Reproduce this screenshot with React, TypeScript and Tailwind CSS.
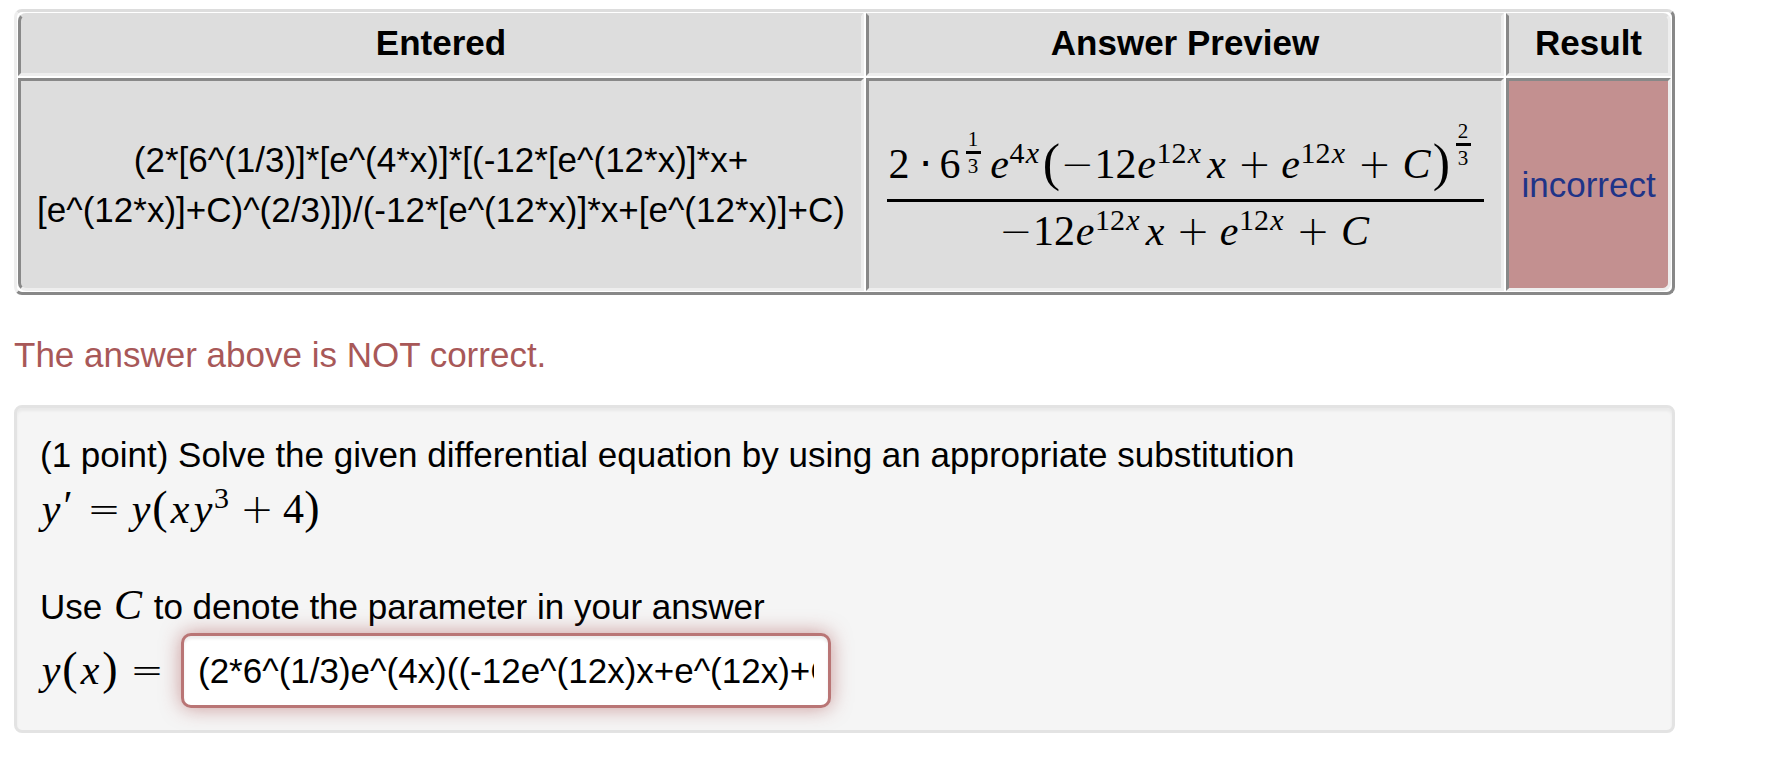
import React from "react";

type SymProps = { children: React.ReactNode; className: string };

function Sym({ children, className }: SymProps) {
  return <span className={`inline-block text-center ${className}`}>{children}</span>;
}

const E = () => <Sym className="w-5 italic">e</Sym>;
const X = () => <Sym className="w-6 italic">x</Sym>;
const Y = () => <Sym className="w-[22px] italic">y</Sym>;
const C = () => <Sym className="w-8 italic">C</Sym>;
const D = ({ n }: { n: string }) => <Sym className="w-[21px]">{n}</Sym>;

function Op({ children, tight = false }: { children: string; tight?: boolean }) {
  return (
    <Sym
      className={`w-[34px] font-['DejaVu_Sans',sans-serif] text-[40px] leading-none font-extralight ${tight ? "" : "mx-[9px]"}`}
    >
      {children}
    </Sym>
  );
}

function Paren({ children, big = false }: { children: string; big?: boolean }) {
  return (
    <Sym className={big ? "w-[18px] align-[-2px] text-[52px] leading-none" : "w-4 text-[46px] leading-none"}>
      {children}
    </Sym>
  );
}

function Power({ digits, variable = false }: { digits: string; variable?: boolean }) {
  return (
    <span className="mr-[2px] inline-block align-[15px] text-[30px] leading-none">
      {digits}
      {variable && <Sym className="w-4 italic">x</Sym>}
    </span>
  );
}

function SmallFraction({ top, bottom, className }: { top: string; bottom: string; className: string }) {
  return (
    <span className={`inline-flex w-[15px] flex-col text-center text-[21px] leading-[24px] ${className}`}>
      <span className="border-b-3 border-black">{top}</span>
      <span>{bottom}</span>
    </span>
  );
}

function MathText({ children, className = "leading-[52px]" }: { children: React.ReactNode; className?: string }) {
  return (
    <span className={`font-['Liberation_Serif',serif] text-[42px] whitespace-nowrap ${className}`}>
      {children}
    </span>
  );
}

function AnswerPreview() {
  return (
    <MathText className="inline-flex flex-col items-center pt-[6px] leading-[52px]">
      <span className="border-b-3 border-black pr-[13px] pb-[9px] pl-[2px]">
        <D n="2" />
        <Sym className="mx-[9px] w-3">⋅</Sym>
        <D n="6" />
        <SmallFraction top="1" bottom="3" className="mr-[9px] ml-[5px] align-[32px]" />
        <E />
        <Power digits="4" variable />
        <Paren big>(</Paren>
        <Op tight>−</Op>
        <D n="1" />
        <D n="2" />
        <E />
        <Power digits="12" variable />
        <X />
        <Op>+</Op>
        <E />
        <Power digits="12" variable />
        <Op>+</Op>
        <C />
        <Paren big>)</Paren>
        <SmallFraction top="2" bottom="3" className="ml-[5px] align-[40px]" />
      </span>
      <span className="pt-[3px]">
        <Op tight>−</Op>
        <D n="1" />
        <D n="2" />
        <E />
        <Power digits="12" variable />
        <X />
        <Op>+</Op>
        <E />
        <Power digits="12" variable />
        <Op>+</Op>
        <C />
      </span>
    </MathText>
  );
}

const cell = "border-3 border-t-[#888] border-r-[#eee] border-b-[#eee] border-l-[#888] bg-[#ddd] p-[3px]";
const head =
  "border-3 border-t-[#ddd] border-r-[#eee] border-b-[#eee] border-l-[#888] bg-[#ddd] px-[3px] pt-[2px] pb-[5px] font-bold";

export default function App() {
  return (
    <main className="min-h-screen bg-white pt-[9px] pr-[108px] pb-[30px] pl-[14px] font-['Liberation_Sans',sans-serif] text-[35px] leading-[50px] text-black">
      <div className="rounded-lg border-3 border-t-[#ddd] border-r-[#888] border-b-[#888] border-l-[#eee]">
        <table className="-m-px w-[calc(100%+2px)] table-fixed border-separate border-spacing-[2px] text-center">
          <colgroup>
            <col className="w-[51.3%]" />
            <col className="w-[38.7%]" />
            <col className="w-[10%]" />
          </colgroup>
          <thead>
            <tr className="h-[63px]">
              <th className={`${head} rounded-tl-lg`}>Entered</th>
              <th className={head}>Answer Preview</th>
              <th className={`${head} rounded-tr-lg`}>Result</th>
            </tr>
          </thead>
          <tbody>
            <tr className="h-[213px]">
              <td className={`${cell} rounded-bl-lg`}>
                (2*[6^(1/3)]*[e^(4*x)]*[(-12*[e^(12*x)]*x+
                <wbr />
                [e^(12*x)]+C)^(2/3)])/(-12*[e^(12*x)]*x+[e^(12*x)]+C)
              </td>
              <td className={cell}>
                <AnswerPreview />
              </td>
              <td className="rounded-br-lg border-3 border-t-[#888] border-r-[#eee] border-b-[#eee] border-l-[#888] bg-[#c39090] p-[3px]">
                <a href="#answer" className="text-[#1f3488]">
                  incorrect
                </a>
              </td>
            </tr>
          </tbody>
        </table>
      </div>

      <p className="mt-[35px] text-[#a85858]">The answer above is NOT correct.</p>

      <section className="mt-[25px] rounded-lg border-3 border-[#e3e3e3] bg-[#f5f5f5] px-[23px] py-[22px] shadow-[inset_0_3px_3px_rgba(0,0,0,0.05)]">
        <p>(1 point) Solve the given differential equation by using an appropriate substitution</p>
        <p className="h-[52px]">
          <MathText>
            <Y />
            <Sym className="mr-1 w-3 align-[3px]">′</Sym>
            <Op>=</Op>
            <Y />
            <Paren>(</Paren>
            <X />
            <Y />
            <Power digits="3" />
            <Op>+</Op>
            <D n="4" />
            <Paren>)</Paren>
          </MathText>
        </p>
        <p className="mt-[50px] h-[51px]">
          Use <MathText className="leading-none"><C /></MathText> to denote the parameter in your answer
        </p>
        <div className="flex items-center">
          <label htmlFor="answer" className="mr-[17px]">
            <MathText>
              <Y />
              <Paren>(</Paren>
              <X />
              <Paren>)</Paren>
              <Sym className="ml-3">
                <Op tight>=</Op>
              </Sym>
            </MathText>
          </label>
          <input
            id="answer"
            type="text"
            defaultValue="(2*6^(1/3)e^(4x)((-12e^(12x)x+e^(12x)+C)^(2/3))/(-12e^(12x)x+e^(12x)+C)"
            className="h-[75px] w-[650px] rounded-[10px] border-3 border-[#b97575] bg-white px-[14px] py-[10px] shadow-[inset_0_3px_3px_rgba(0,0,0,0.075),0_0_20px_rgba(160,60,60,0.5)] outline-none"
          />
        </div>
      </section>
    </main>
  );
}
